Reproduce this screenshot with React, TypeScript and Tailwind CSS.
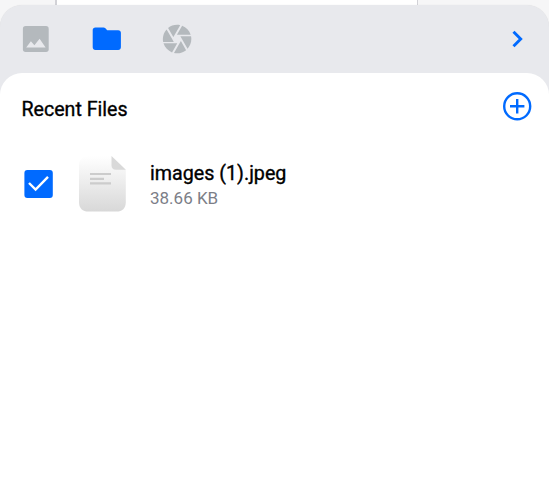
export default function App() {
  return (
    <div className="flex h-[496px] w-[549px] flex-col overflow-hidden bg-[#f6f6f7] font-[Roboto,sans-serif]">
      <div className="flex h-[4.5px] shrink-0">
        <div className="w-[55px]" />
        <div className="-mb-2 w-[363px] shrink-0 border-l-2 border-r border-[#d2d2d7] bg-white" />
      </div>
      <main className="relative flex flex-1 flex-col rounded-t-[22px] bg-[#e8e9ed] shadow-[0_0_1px_rgba(0,0,0,0.12)]">
        <header className="flex h-[68px] shrink-0 items-center pl-[22px] pr-[25px] pt-px">
          <svg className="h-[27px] w-[27px]" viewBox="0 0 27 27" aria-label="Images">
            <rect x="0.9" y="0.1" width="25.8" height="25.8" rx="2.7" fill="#b4b9bd" />
            <path d="M4.2 21.5 8.9 15.2l3.5 4.1 5.2-6.5 6 8.7Z" fill="#e8e9ed" />
          </svg>
          <svg className="ml-[43px] h-[24px] w-[29px]" viewBox="0 0 29 24" aria-label="Files">
            <path d="M3.4 .4h8.1c.8 0 1.4.2 1.9.8l1.8 2h11c1.6 0 2.7 1 2.7 2.6v14.5c0 1.6-1.1 2.7-2.7 2.7H3.4C1.8 23 .7 21.9.7 20.3V3.1C.7 1.5 1.8.4 3.4.4Z" fill="#006aff" />
          </svg>
          <svg className="ml-[39.2px] h-[34.2px] w-[34.2px]" viewBox="0 0 24 24" fill="#b4b9bd" aria-label="Camera">
            <path d="M9.4 10.5l4.77-8.26C13.47 2.09 12.75 2 12 2c-2.4 0-4.6.85-6.32 2.25l3.66 6.35.06-.1zM21.54 9c-.92-2.92-3.15-5.26-6-6.34L11.88 9h9.66zm.26 1h-7.49l.29.5 4.76 8.25C21 16.97 22 14.61 22 12c0-.69-.07-1.35-.2-2zM8.54 12l-3.9-6.75C3.01 7.03 2 9.39 2 12c0 .69.07 1.35.2 2h7.49l-1.15-2zm-6.08 3c.92 2.92 3.15 5.26 6 6.34L12.12 15H2.46zm11.27 0l-3.9 6.76c.7.15 1.42.24 2.17.24 2.4 0 4.6-.85 6.32-2.25l-3.66-6.35-.93 1.6z" />
          </svg>
          <svg className="ml-auto h-[18px] w-[12px]" viewBox="0 0 12 18" fill="none" aria-label="Next">
            <path d="m1.5 1.7 7.2 7.3-7.2 7.3" stroke="#006aff" strokeWidth="2.9" />
          </svg>
        </header>
        <section className="flex-1 rounded-t-[22px] bg-white">
          <div className="flex items-start justify-between pl-[21.5px] pr-[17px] pt-[18.5px]">
            <h1 className="mt-[7px] text-[19.6px] font-normal leading-6 text-black [-webkit-text-stroke:0.35px_black]">Recent Files</h1>
            <svg className="h-[31px] w-[30px]" viewBox="0 0 30 31" fill="none" stroke="#006aff" strokeWidth="2.4" aria-label="Add">
              <circle cx="15.2" cy="15.3" r="13" />
              <path d="M15.2 8.1v14.4M8 15.3h14.4" />
            </svg>
          </div>
          <div className="mt-[34px] flex items-start pl-6">
            <svg className="mt-[13px] h-[29px] w-[29px]" viewBox="0 0 29 29" fill="none" aria-label="Selected">
              <rect x="0.4" y="0.9" width="28.4" height="28" rx="3" fill="#006aff" />
              <path d="m5 14 6.6 6.6L24 7.8" stroke="white" strokeWidth="2.4" />
            </svg>
            <svg className="ml-[26px] h-[57px] w-[47px]" viewBox="0 0 47 57" aria-label="Document">
              <defs>
                <linearGradient id="paper" x1="0" y1="0" x2="0" y2="1">
                  <stop stopColor="#ffffff" />
                  <stop offset="1" stopColor="#d8d8d8" />
                </linearGradient>
              </defs>
              <path d="M10 0h22.7L46.8 13.7v32.5c0 6-3.5 9.3-9.5 9.3H9.5C3.5 55.5 0 52.2 0 46.2V9.5C0 3.5 4 0 10 0Z" fill="url(#paper)" />
              <path d="M32.5 0 46.8 13.7H37c-3 0-4.5-1.6-4.5-4.5Z" fill="#d9d9d9" />
              <path d="M11 18h21M11 22.8h14M11 27.4h21" stroke="#cccccc" strokeWidth="2.2" />
            </svg>
            <div className="ml-6 pt-[6px]">
              <p className="text-[19.7px] font-normal leading-6 text-black [-webkit-text-stroke:0.35px_black]">images (1).jpeg</p>
              <p className="text-[17px] leading-6 text-[#7c7e87]">38.66 KB</p>
            </div>
          </div>
        </section>
      </main>
    </div>
  );
}
